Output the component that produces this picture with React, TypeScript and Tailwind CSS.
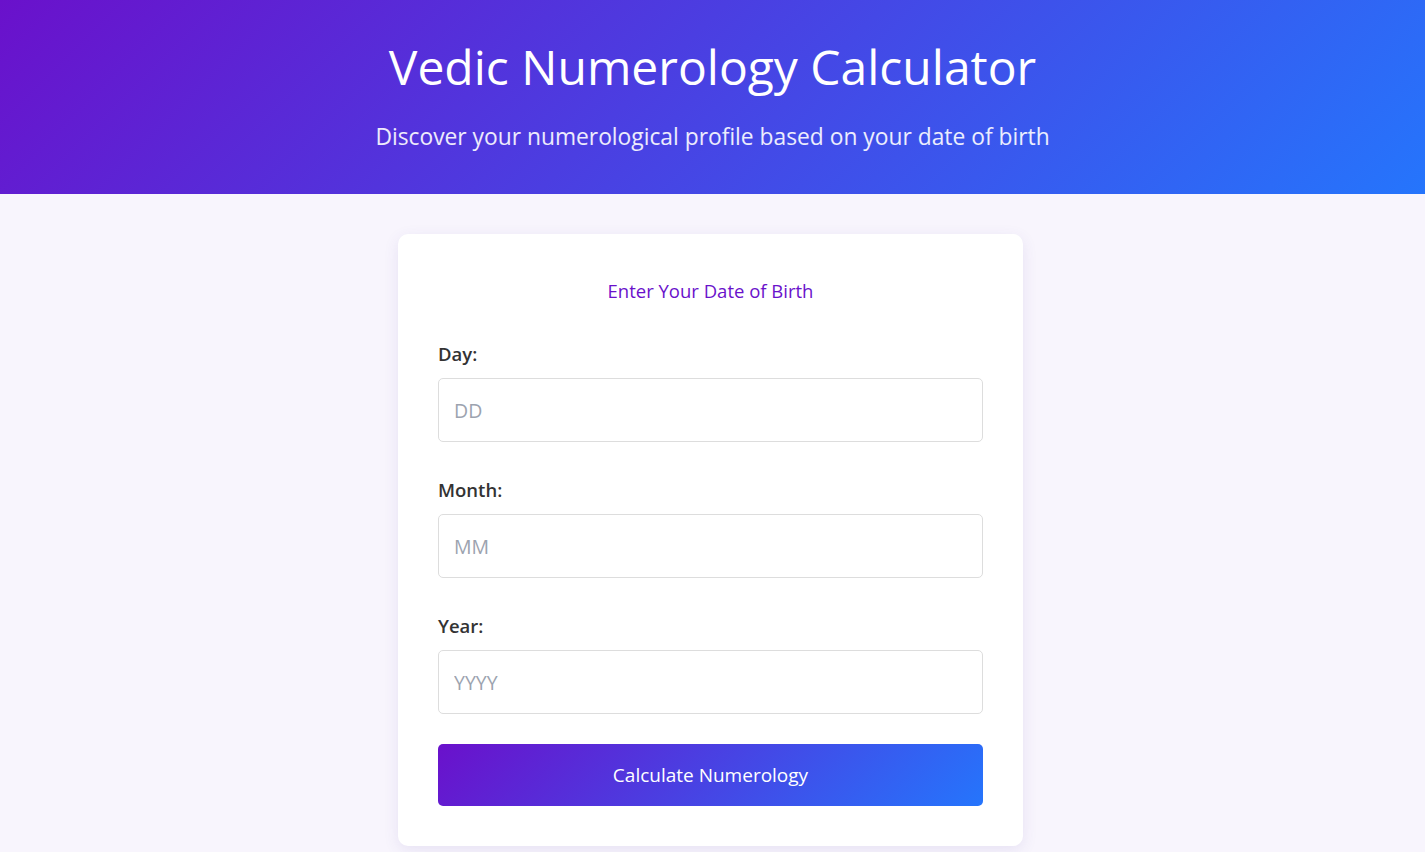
const FIELDS = [
  { id: "day", label: "Day:", placeholder: "DD" },
  { id: "month", label: "Month:", placeholder: "MM" },
  { id: "year", label: "Year:", placeholder: "YYYY" },
];

export default function App() {
  return (
    <div className="min-h-[852px] bg-[#f8f5fd] font-['Open_Sans',sans-serif]">
      <header className="bg-[linear-gradient(135deg,#6a11cb,#2575fc)] px-4 pt-[38px] pb-[39px] text-center text-white">
        <h1 className="text-[48px] leading-[58px] font-normal">Vedic Numerology Calculator</h1>
        <p className="mt-[23px] text-[22.8px] leading-[36px] text-white/90">
          Discover your numerological profile based on your date of birth
        </p>
      </header>

      <main className="flex justify-center pl-4 pr-[20px] pt-[40px]">
        <form className="w-[625px] rounded-[10px] bg-white px-[40px] pt-[42px] pb-[40px] shadow-[0_4px_15px_rgba(80,60,160,0.1)]">
          <h2 className="text-center text-[18.5px] leading-[30px] text-[#6a11cb]">Enter Your Date of Birth</h2>
          <div className="mt-[34px] flex flex-col gap-[34px]">
            {FIELDS.map((f) => (
              <div key={f.id} className="flex flex-col gap-[11px]">
                <label htmlFor={f.id} className="text-[18.5px] leading-[27px] font-semibold text-[#333]">
                  {f.label}
                </label>
                <input
                  id={f.id}
                  type="text"
                  placeholder={f.placeholder}
                  className="h-[64px] w-full rounded-[5px] border border-[#ddd] px-[15px] text-[19.5px] text-[#333] placeholder:text-[#9ca3af] outline-none"
                />
              </div>
            ))}
          </div>
          <button
            type="button"
            className="mt-[30px] h-[62px] w-full rounded-[5px] bg-[linear-gradient(135deg,#6a11cb,#2575fc)] text-[19px] text-white"
          >
            Calculate Numerology
          </button>
        </form>
      </main>
    </div>
  );
}
